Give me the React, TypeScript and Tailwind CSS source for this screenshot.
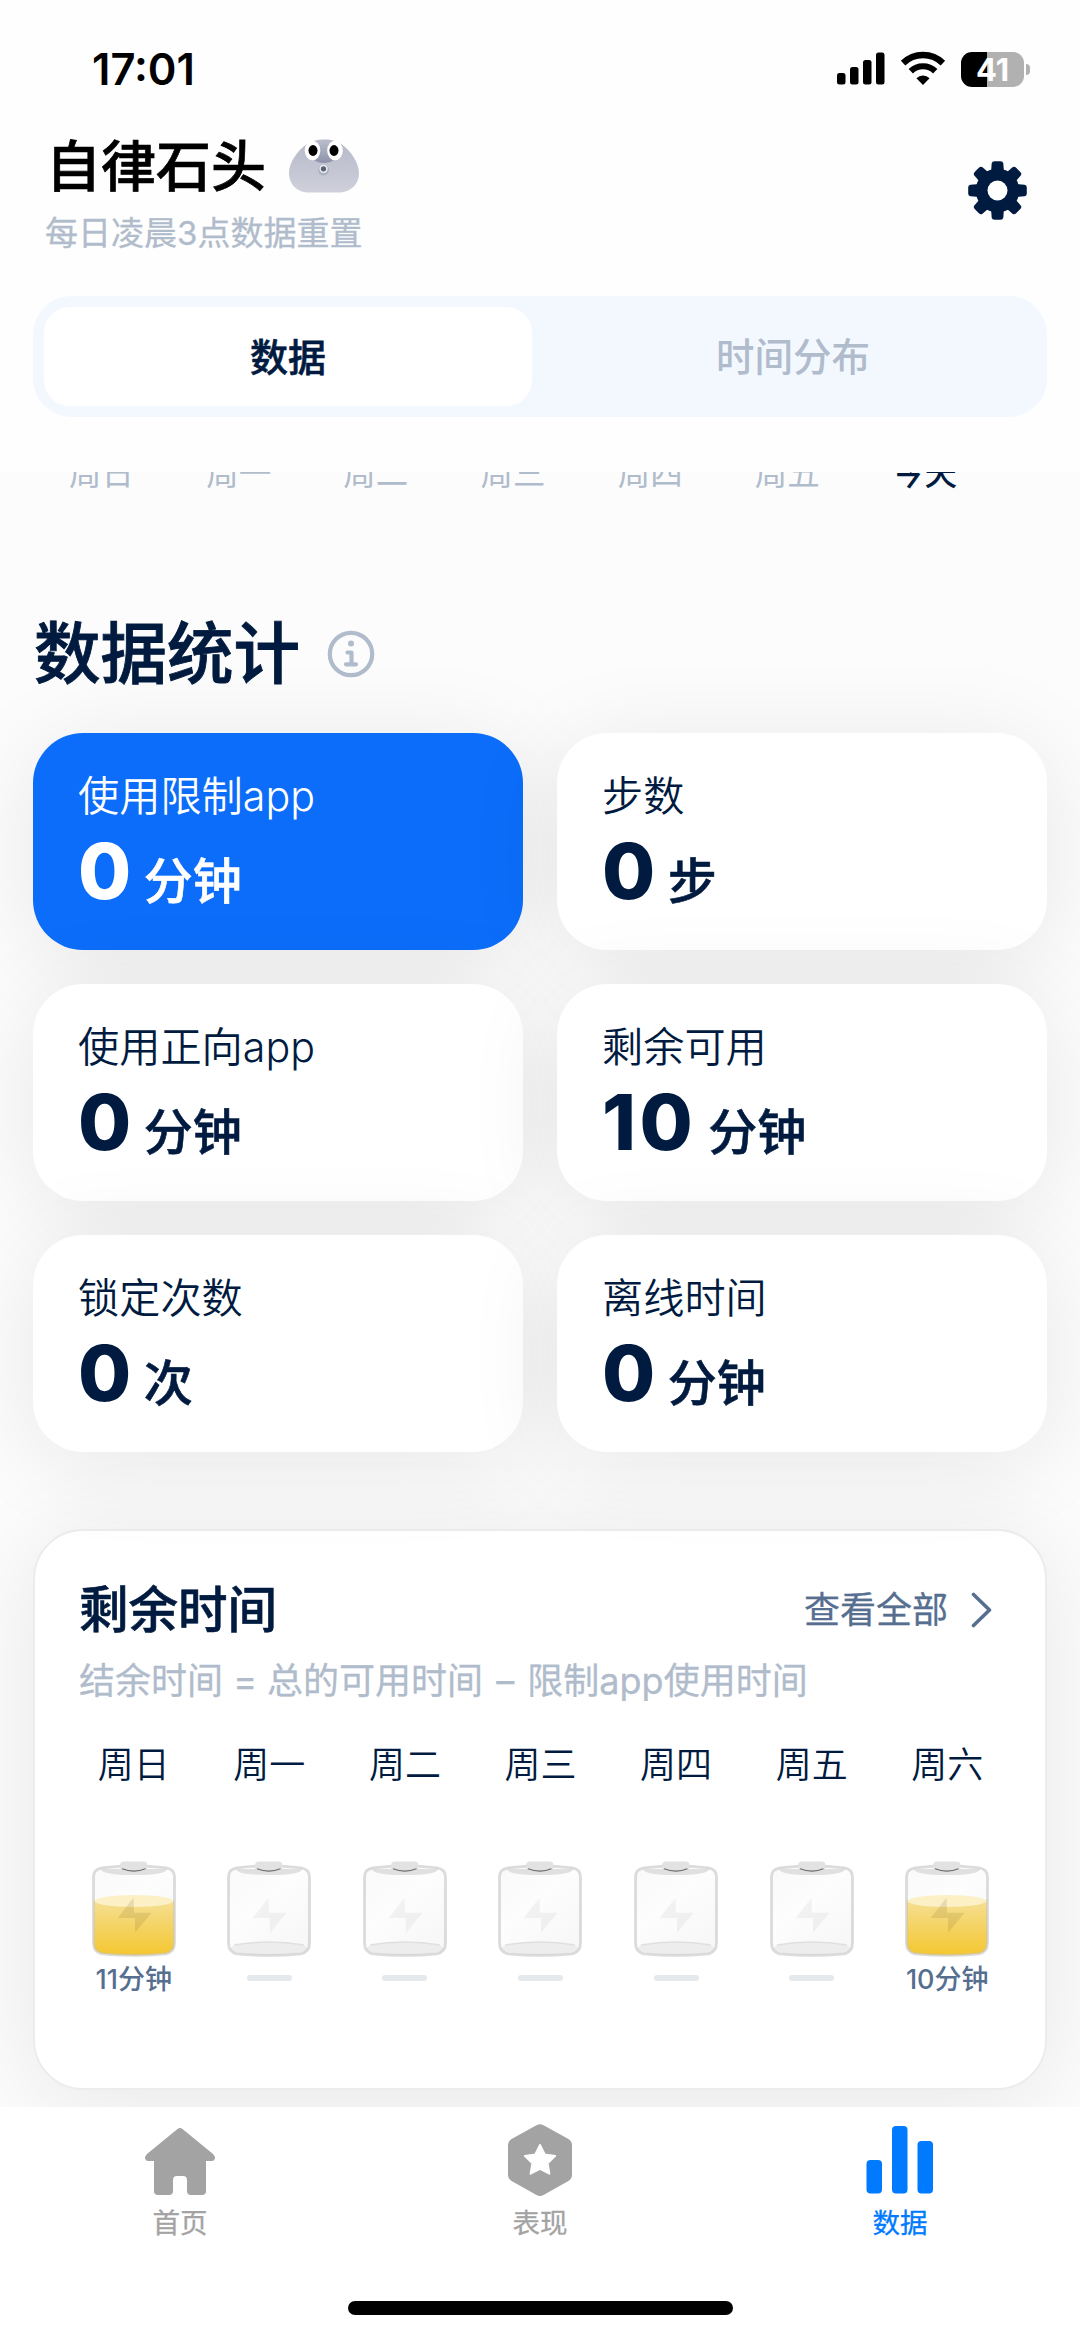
import clsx from 'clsx';
import { FC } from 'react';

const weekdays = ['周日', '周一', '周二', '周三', '周四', '周五', '今天'];

const stats = [
  { label: '使用限制app', value: 0, unit: '分钟', active: true },
  { label: '步数', value: 0, unit: '步' },
  { label: '使用正向app', value: 0, unit: '分钟' },
  { label: '剩余可用', value: 10, unit: '分钟' },
  { label: '锁定次数', value: 0, unit: '次' },
  { label: '离线时间', value: 0, unit: '分钟' },
];

const remaining = [
  { day: '周日', minutes: 11 },
  { day: '周一', minutes: 0 },
  { day: '周二', minutes: 0 },
  { day: '周三', minutes: 0 },
  { day: '周四', minutes: 0 },
  { day: '周五', minutes: 0 },
  { day: '周六', minutes: 10 },
];

const StatusBar: FC = () => (
  <div className="flex h-[52px] items-center justify-between pr-[50px] pl-[92px]">
    <span className="text-[43.5px] leading-[50px] font-semibold text-black">17:01</span>
    <div className="flex items-center gap-[15px]">
      <svg width="48" height="36" viewBox="0 0 48 36">
        <rect x="0" y="22" width="8.5" height="11.5" rx="2.5" />
        <rect x="13" y="16" width="8.5" height="17.5" rx="2.5" />
        <rect x="26" y="9" width="8.5" height="24.5" rx="2.5" />
        <rect x="39" y="1.5" width="8.5" height="32" rx="2.5" />
      </svg>
      <svg width="46" height="36" viewBox="0 0 46 36">
        <path d="M3.1 12.1A28.5 28.5 0 0 1 42.9 12.1" fill="none" stroke="#000" strokeWidth="6.4" />
        <path d="M10.8 20.2A17.5 17.5 0 0 1 35.2 20.2" fill="none" stroke="#000" strokeWidth="6.2" />
        <path d="M16.4 27.2A9.6 9.6 0 0 1 29.6 27.2L23 34Z" />
      </svg>
      <div className="flex items-center gap-[2px]">
        <div className="flex h-[35px] w-[63px] items-center justify-center rounded-[11px] bg-[linear-gradient(to_right,#000_41%,#b1b1b1_41%)] text-[31px] leading-none font-bold text-white">
          41
        </div>
        <div className="h-[11px] w-1 rounded-r-full bg-[#b1b1b1]" />
      </div>
    </div>
  </div>
);

const Stone: FC = () => (
  <svg width="72" height="54" viewBox="0 0 72 54">
    <defs>
      <linearGradient id="stone" x1="0" y1="0" x2="0" y2="1">
        <stop offset="0" stopColor="#b5b9c8" />
        <stop offset="0.55" stopColor="#c4c5d3" />
        <stop offset="1" stopColor="#cfd0db" />
      </linearGradient>
      <linearGradient id="brow" x1="0" y1="0" x2="0" y2="1">
        <stop offset="0" stopColor="#b9bdca" />
        <stop offset="1" stopColor="#8d92ab" />
      </linearGradient>
    </defs>
    <path
      d="M36 0.5C44 0.5 50 2.5 54 5.5C63 12 71 24 71 34C71 46 62 53.5 50 53.5H21C10 53.5 1 46 1 34C1 23 10 11 19 5C24 2 29 0.5 36 0.5Z"
      fill="url(#stone)"
    />
    <path d="M27 3C31 1 41 1 45 3C42 11 42 18 46 21C41 25 31 25 26 21C31 17 31 10 27 3Z" fill="url(#brow)" />
    <ellipse cx="24.5" cy="11.5" rx="7.8" ry="9.8" fill="#fff" />
    <ellipse cx="47" cy="11.5" rx="7.8" ry="9.8" fill="#fff" />
    <ellipse cx="25" cy="11.5" rx="4.5" ry="5.4" />
    <ellipse cx="46" cy="11.5" rx="4.5" ry="5.4" />
    <circle cx="35.5" cy="31" r="5.5" fill="#aeb2c0" />
    <circle cx="35.5" cy="29.8" r="3.4" fill="#5b6174" stroke="#eceef4" strokeWidth="1.5" />
  </svg>
);

const GearIcon: FC = () => (
  <svg width="59" height="59" viewBox="-29.5 -29.5 59 59" fill="#001b3f">
    {[0, 45, 90, 135, 180, 225, 270, 315].map((angle) => (
      <path
        key={angle}
        transform={`rotate(${angle})`}
        d="M-6.5 -18L-5.8 -27Q-5.5 -29.3 -3 -29.3H3Q5.5 -29.3 5.8 -27L6.5 -18Z"
      />
    ))}
    <circle r="21.8" />
    <circle r="10" fill="#fff" />
  </svg>
);

const InfoIcon: FC = () => (
  <svg width="48" height="48" viewBox="0 0 48 48" fill="none" stroke="#b0bccb" strokeLinecap="round">
    <circle cx="24" cy="24" r="21.2" strokeWidth="4.2" />
    <circle cx="24" cy="13.5" r="3" fill="#b0bccb" stroke="none" />
    <path d="M20.5 22.5H24.5V34M19 34.3H29" strokeWidth="4.2" strokeLinejoin="round" />
  </svg>
);

const Battery: FC<{ filled: boolean }> = ({ filled }) => (
  <svg width="84" height="96" viewBox="0 0 84 96">
    <defs>
      <linearGradient id="liquid" x1="0" y1="0" x2="0" y2="1">
        <stop offset="0" stopColor="#f5df94" />
        <stop offset="1" stopColor="#f4c62c" />
      </linearGradient>
      <linearGradient id="glass" x1="0" y1="0" x2="0.7" y2="1">
        <stop offset="0" stopColor="#f9f9f9" />
        <stop offset="0.5" stopColor="#fdfdfd" />
        <stop offset="1" stopColor="#f7f7f7" />
      </linearGradient>
      <clipPath id="shell">
        <path d="M1.5 16Q1.5 8 10 6.8Q42 3 74 6.8Q82.5 8 82.5 16V82Q82.5 91 74 92.8Q42 96 10 92.8Q1.5 91 1.5 82Z" />
      </clipPath>
    </defs>
    <g clipPath="url(#shell)">
      <rect width="84" height="96" fill="url(#glass)" />
      <path d="M9 8H75Q74 14 42 14Q10 14 9 8Z" fill="#e0e0e0" />
      {filled ? (
        <>
          <rect y="39" width="84" height="57" fill="url(#liquid)" />
          <ellipse cx="42" cy="40" rx="39.5" ry="6" fill="#fcf0c6" />
        </>
      ) : (
        <>
          <ellipse cx="42" cy="87.5" rx="38.5" ry="6.5" fill="#ededed" />
          <path d="M7 84Q42 78 77 84" fill="none" stroke="#e0e0e0" strokeWidth="1.5" />
        </>
      )}
    </g>
    <path
      d="M1.5 16Q1.5 8 10 6.8Q42 3 74 6.8Q82.5 8 82.5 16V82Q82.5 91 74 92.8Q42 96 10 92.8Q1.5 91 1.5 82Z"
      fill="none"
      stroke="#c4c4c4"
      strokeOpacity="0.6"
      strokeWidth="2.8"
    />
    <rect x="28" y="0.5" width="27.5" height="9.5" rx="4" fill="#e2e2e2" />
    <path d="M30 7.8Q42 12.4 53.5 7.8" fill="none" stroke="#6b6b6b" strokeWidth="1.2" />
    <path
      d="M41.5 36.7L25.7 57H43V71.7L59.7 51.7H42Z"
      fill={filled ? '#8c7430' : '#999'}
      fillOpacity={filled ? 0.18 : 0.11}
    />
  </svg>
);

const Header: FC = () => (
  <header className="h-[472px] bg-[#fefefe] px-[33px] pt-[43px]">
    <div className="-mx-[33px]">
      <StatusBar />
    </div>
    <div className="mt-[34px] flex items-start justify-between pr-5 pl-3">
      <div>
        <div className="flex items-center gap-[22px] pl-[1px]">
          <h1 className="text-[55px] leading-[74px] font-medium text-black [-webkit-text-stroke:0.7px]">自律石头</h1>
          <Stone />
        </div>
        <p className="text-[33px] leading-[60px] text-[#b0bccb] [-webkit-text-stroke:0.3px]">每日凌晨3点数据重置</p>
      </div>
      <div className="mt-8">
        <GearIcon />
      </div>
    </div>
    <div className="mt-[33px] flex h-[121px] rounded-[38px] bg-[#f3f8ff] p-[11px]">
      <div className="flex w-[488px] items-center justify-center rounded-[26px] bg-white pt-[2px] text-[38px] font-medium text-[#001b3f] [-webkit-text-stroke:0.6px]">
        数据
      </div>
      <div className="flex flex-1 items-center justify-center pt-[2px] pl-[18px] text-[38.5px] font-medium text-[#b0bccb]">
        时间分布
      </div>
    </div>
  </header>
);

const Stats: FC = () => (
  <section className="mt-[120px]">
    <div className="flex items-center gap-[27px] pl-[1px]">
      <h2 className="text-[66.5px] leading-[80px] font-medium text-[#001b3f] [-webkit-text-stroke:0.9px]">数据统计</h2>
      <InfoIcon />
    </div>
    <div className="mt-[39px] grid grid-cols-2 gap-[34px]">
      {stats.map((item) => (
        <div
          key={item.label}
          className={clsx(
            'h-[217px] rounded-[50px] px-[45px] pt-[36px] shadow-[0_12px_96px_rgba(0,0,0,0.085)]',
            item.active ? 'bg-[#0b6df9] text-white' : 'bg-white text-[#001b3f]',
          )}
        >
          <div className="text-[41.2px] leading-[54px] font-[350]">{item.label}</div>
          <div className="mt-[1px] flex items-baseline gap-[12px]">
            <span
              className={clsx(
                'text-[77px] leading-[94px] font-extrabold',
                item.value > 9 ? 'tracking-[3.5px]' : 'tracking-[0.5px]',
              )}
            >
              {item.value}
            </span>
            <span className="text-[49px] font-medium [-webkit-text-stroke:0.6px]">{item.unit}</span>
          </div>
        </div>
      ))}
    </div>
  </section>
);

const RemainingTime: FC = () => (
  <section className="mt-[77px] h-[561px] rounded-[50px] border-2 border-[#ebecec] bg-white px-[44px] pt-[46px] shadow-[0_12px_96px_rgba(0,0,0,0.085)]">
    <div className="flex items-center justify-between pr-[9px]">
      <h3 className="text-[49.5px] leading-[66px] font-medium text-[#001b3f] [-webkit-text-stroke:0.6px]">剩余时间</h3>
      <div className="flex items-center gap-[23px] text-[36px] text-[#566f90] [-webkit-text-stroke:0.3px]">
        查看全部
        <svg width="21" height="36" viewBox="0 0 21 36" fill="none" stroke="currentColor" strokeWidth="3.6">
          <path d="M2.5 2.5L18.5 18L2.5 33.5" strokeLinecap="round" strokeLinejoin="round" />
        </svg>
      </div>
    </div>
    <p className="mt-2 text-[36px] leading-[60px] text-[#b0bccb] [-webkit-text-stroke:0.3px]">
      结余时间 = 总的可用时间 <span className="mx-[3px]">–</span> 限制app使用时间
    </p>
    <div className="-mr-[14px] -ml-[13px] mt-[27px] grid grid-cols-7">
      {remaining.map(({ day, minutes }) => (
        <div key={day} className="flex flex-col items-center">
          <span className="text-[36px] leading-[54px] font-[350] text-[#001b3f]">{day}</span>
          <div className="mt-[69px] h-[96px]">
            <Battery filled={minutes > 0} />
          </div>
          {minutes > 0 ? (
            <span className="mt-[5px] text-[27px] leading-[36px] font-medium text-[#566f90]">{minutes}分钟</span>
          ) : (
            <div className="mt-[18px] h-[6px] w-[45px] rounded-full bg-[#e4e9ee]" />
          )}
        </div>
      ))}
    </div>
  </section>
);

const TabBar: FC = () => (
  <nav className="flex h-[230px] flex-col items-center bg-white">
    <div className="grid w-full grid-cols-3 pt-[16px] text-[27.5px] leading-[36px] text-[#a3a3a3] [-webkit-text-stroke:0.3px]">
      <div className="flex flex-col items-center gap-[8px]">
        <svg width="70" height="74" viewBox="0 -5 70 74" fill="currentColor">
          <path d="M32.5 1Q35 -1 37.5 1L68 26Q71 29 69.5 31.5Q69 33 66 33H61V63Q61 67 57 67H46Q42 67 42 63V52Q42 48 38 48H32Q28 48 28 52V63Q28 67 24 67H13Q9 67 9 63V33H4Q1 33 0.5 31.5Q-1 29 2 26Z" />
        </svg>
        首页
      </div>
      <div className="flex flex-col items-center gap-[8px]">
        <svg width="64" height="74" viewBox="0 0 64 74" fill="currentColor">
          <path d="M28.5 2.2Q32 0.5 35.5 2.2L60 15.8Q64 18 64 22V52Q64 56 60 58.2L35.5 72Q32 73.8 28.5 72L4 58.2Q0 56 0 52V22Q0 18 4 15.8Z" />
          <path
            d="M32 22L36.7 31.4L47.2 32.9L39.6 40.2L41.4 50.7L32 45.8L22.6 50.7L24.4 40.2L16.8 32.9L27.3 31.4Z"
            fill="#fff"
            stroke="#fff"
            strokeWidth="2"
            strokeLinejoin="round"
          />
        </svg>
        表现
      </div>
      <div className="flex flex-col items-center gap-[8px] text-[#007aff]">
        <svg width="68" height="74" viewBox="0 0 68 74" fill="currentColor">
          <rect x="0.5" y="37" width="15.5" height="33.5" rx="4" />
          <rect x="26" y="3" width="15.5" height="67.5" rx="4" />
          <rect x="51.5" y="18" width="15.5" height="52.5" rx="4" />
        </svg>
        数据
      </div>
    </div>
    <div className="mt-[60px] h-[14px] w-[385px] rounded-full bg-black" />
  </nav>
);

export default function App() {
  return (
    <div className="flex h-[2337px] w-[1080px] flex-col overflow-hidden bg-white font-['Inter','Noto_Sans_CJK_SC',sans-serif] whitespace-nowrap">
      <Header />
      <main className="h-[1635px] overflow-hidden bg-[#fcfcfc] px-[33px]">
        <div className="-mt-[18px] grid w-[960px] grid-cols-7 text-center text-[32.5px] leading-[40px] text-[#b0bccb]">
          {weekdays.map((day) => (
            <span key={day} className={clsx(day === '今天' && 'font-medium text-[#001b3f]')}>
              {day}
            </span>
          ))}
        </div>
        <Stats />
        <RemainingTime />
      </main>
      <TabBar />
    </div>
  );
}
